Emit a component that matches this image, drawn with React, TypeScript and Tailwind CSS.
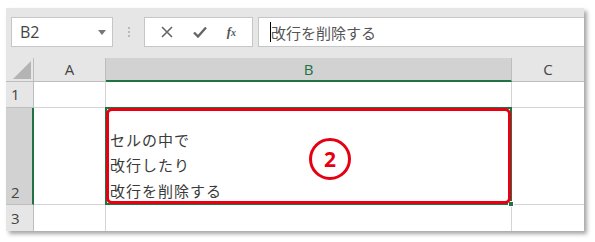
const jp = { fontFamily: '"Noto Sans CJK JP", "Noto Sans", sans-serif' };
const latin = { fontFamily: '"Open Sans", sans-serif' };

export default function App() {
  return (
    <div className="w-[595px] h-[242px] bg-white pt-[8px] pl-[6px]" style={jp}>
      <div className="w-[578px] bg-[#e6e6e6] shadow-[3px_3px_4px_rgba(0,0,0,0.35)]">
        {/* formula toolbar */}
        <div className="h-[50px] flex items-start pt-[9px] pl-[5px]">
          <div className="w-[102px] h-[30px] bg-white border border-[#c6c6c6] flex items-center justify-between pl-[8px] pr-[6px]">
            <span className="text-[16px] text-[#444]" style={latin}>B2</span>
            <svg width="8" height="5" viewBox="0 0 8 5"><path d="M0 0h8L4 5z" fill="#777" /></svg>
          </div>
          <div className="w-[31px] h-[30px] flex flex-col items-center justify-center gap-[2px]">
            <span className="w-[2px] h-[2px] bg-[#b9b9b9]" />
            <span className="w-[2px] h-[2px] bg-[#b9b9b9]" />
            <span className="w-[2px] h-[2px] bg-[#b9b9b9]" />
          </div>
          <div className="w-[109px] h-[30px] bg-white border border-[#c6c6c6] flex items-center justify-around px-[6px]">
            <svg width="12" height="12" viewBox="0 0 12 12"><path d="M1 1l10 10M11 1L1 11" stroke="#666" strokeWidth="1.6" /></svg>
            <svg width="14" height="12" viewBox="0 0 14 12"><path d="M1 6.5l4 4L13 1.5" stroke="#666" strokeWidth="2.4" fill="none" /></svg>
            <span className="italic text-[13px] text-[#555] font-semibold" style={{ fontFamily: '"Liberation Serif", serif' }}>f<span className="text-[10px]">x</span></span>
          </div>
          <div className="ml-[5px] flex-1 h-[30px] bg-white border border-r-0 border-[#c6c6c6] flex items-center pl-[11px]">
            <span className="w-px h-[20px] bg-black" />
            <span className="text-[15px] text-[#555] leading-none">改行を削除する</span>
          </div>
        </div>

        {/* sheet grid */}
        <div className="grid grid-cols-[28px_72px_406px_72px] grid-rows-[24px_26px_97px_26px] text-[#444]">
          {/* header row */}
          <div className="bg-[#e6e6e6] border-r border-b border-[#bdbdbd] flex items-end justify-end pr-[2px] pb-[2px]">
            <svg width="18" height="18" viewBox="0 0 18 18"><path d="M18 0V18H0z" fill="#b4b4b4" /></svg>
          </div>
          <div className="bg-[#e6e6e6] border-r border-b border-[#bdbdbd] flex items-center justify-center text-[15px]" style={latin}>A</div>
          <div className="bg-[#d2d2d2] border-r border-[#bdbdbd] border-b-2 border-b-[#217346] flex items-center justify-center text-[15px] text-[#217346]" style={latin}>B</div>
          <div className="bg-[#e6e6e6] border-b border-[#bdbdbd] flex items-center justify-center text-[15px]" style={latin}>C</div>

          {/* row 1 */}
          <div className="bg-[#e6e6e6] border-r border-b border-[#bdbdbd] flex items-center pl-[5px] text-[15px]" style={latin}>1</div>
          <div className="bg-white border-r border-b border-[#d4d4d4]" />
          <div className="bg-white border-r border-[#d4d4d4]" />
          <div className="bg-white border-b border-[#d4d4d4]" />

          {/* row 2 */}
          <div className="bg-[#d2d2d2] border-r-2 border-r-[#217346] border-b border-[#bdbdbd] flex items-end pl-[5px] pb-[1px] text-[15px]" style={latin}>2</div>
          <div className="bg-white border-r border-b border-[#d4d4d4]" />
          <div className="relative bg-white border-2 border-[#217346] -ml-px -mt-px flex flex-col justify-end pl-[3px] text-[15px] leading-[25.5px] tracking-[1px] text-[#3a3a3a]">
            <div>セルの中で</div>
            <div>改行したり</div>
            <div>改行を削除する</div>
            <div className="absolute -right-[4px] -bottom-[4px] w-[6px] h-[6px] bg-[#217346] border border-white" />
            <div className="absolute -left-[1px] -top-[1px] -right-[1px] -bottom-[1px] border-[3px] border-[#e60012] rounded-[6px]" />
            <div className="absolute left-[202px] top-[29px] w-[42px] h-[42px] rounded-full border-[3px] border-[#e60012] flex items-center justify-center text-[#e60012] text-[21px] font-bold leading-none tracking-normal" style={{ fontFamily: '"Noto Sans", sans-serif' }}>2</div>
          </div>
          <div className="bg-white border-b border-[#d4d4d4]" />

          {/* row 3 */}
          <div className="bg-[#e6e6e6] border-r border-[#bdbdbd] flex items-center pl-[5px] text-[15px]" style={latin}>3</div>
          <div className="bg-white border-r border-[#d4d4d4]" />
          <div className="bg-white border-r border-[#d4d4d4]" />
          <div className="bg-white" />
        </div>
      </div>
    </div>
  );
}
